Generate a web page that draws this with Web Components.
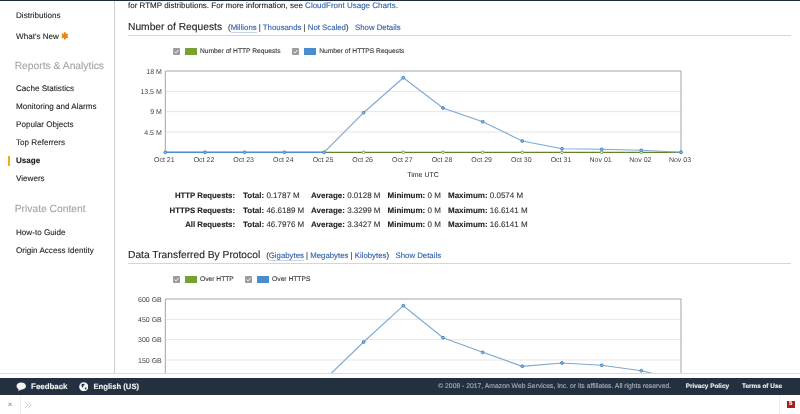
<!DOCTYPE html>
<html><head><meta charset="utf-8">
<style>
html,body{margin:0;padding:0;height:100%;overflow:hidden;background:#fff;font-family:"Liberation Sans",Arial,sans-serif}
body{filter:blur(.35px);text-rendering:geometricPrecision;-webkit-text-stroke:.1px}
</style></head><body>
<console-shell>
  <side-nav slot="nav">
    <nav-item>Distributions</nav-item>
    <nav-item style="margin-top:3px">What's New <span style="color:#e8860c;font-weight:700;font-size:8.5px;line-height:9px">✱</span></nav-item>
    <nav-title style="margin-top:10px">Reports &amp; Analytics</nav-title>
    <nav-item>Cache Statistics</nav-item>
    <nav-item>Monitoring and Alarms</nav-item>
    <nav-item>Popular Objects</nav-item>
    <nav-item>Top Referrers</nav-item>
    <nav-item active>Usage</nav-item>
    <nav-item>Viewers</nav-item>
    <nav-title style="margin-top:11px;height:25px">Private Content</nav-title>
    <nav-item>How-to Guide</nav-item>
    <nav-item>Origin Access Identity</nav-item>
  </side-nav>
  <main-pane slot="main">
    <intro-line>for RTMP distributions. For more information, see <a>CloudFront Usage Charts.</a></intro-line>
    <section-head title="Number of Requests" units="Millions|Thousands|Not Scaled"></section-head>
    <chart-legend a="Number of HTTP Requests" b="Number of HTTPS Requests" gap="11.7"></chart-legend>
    <line-chart height="127" unit=" M" ticks="4.5,9,13.5,18"
      pts="152.3,152.3,152.3,152.3,152.3,112.7,77.7,108,121.7,141,148.7,149.3,150.3,152.3" axis="1"></line-chart>
    <stats-grid>
      <stat-row label="HTTP Requests:" total="0.1787 M" avg="0.0128 M" min="0 M" max="0.0574 M"></stat-row>
      <stat-row label="HTTPS Requests:" total="46.6189 M" avg="3.3299 M" min="0 M" max="16.6141 M"></stat-row>
      <stat-row label="All Requests:" total="46.7976 M" avg="3.3427 M" min="0 M" max="16.6141 M"></stat-row>
    </stats-grid>
    <section-head style="margin-top:12.5px" title="Data Transferred By Protocol" units="Gigabytes|Megabytes|Kilobytes"></section-head>
    <chart-legend a="Over HTTP" b="Over HTTPS" gap="11.3"></chart-legend>
    <line-chart height="90" unit=" GB" ticks="150,300,450,600"
      pts="380.3,380.3,380.3,380.3,380.3,342,305.7,337.7,352.3,366.3,363,365.3,370.7,380.3" second="1"></line-chart>
  </main-pane>
</console-shell>
<console-footer></console-footer>
<tool-bar></tool-bar>
<script>
function def(name, html){
  customElements.define(name,class extends HTMLElement{
    constructor(){super();this.attachShadow({mode:'open'});}
    connectedCallback(){
      this.shadowRoot.innerHTML = typeof html==='function'?html(this):html;
    }
  });
}
def('console-shell',`<style>
:host{display:block;height:374px;overflow:hidden;border-top:1px solid #1f2d3d;border-bottom:1px solid #dcdcdc;box-sizing:border-box}
.r{display:flex;height:100%}
::slotted([slot=nav]){flex:0 0 114px;min-width:0}
::slotted([slot=main]){flex:1;min-width:0}
</style><div class="r"><slot name="nav"></slot><slot name="main"></slot></div>`);
def('side-nav',`<style>
:host{display:block;border-right:1px solid #cfcfcf;padding-top:5.5px;height:100%;font-size:8.1px;color:#222}
</style><slot></slot>`);
def('nav-item',el=>`<style>
:host{display:block;height:18px;line-height:18px;padding-left:16px;position:relative;color:#222;white-space:nowrap}
:host([active]){font-weight:700}
.bar{position:absolute;left:8px;top:4px;width:2px;height:10px;background:#f5a623;display:block}
</style>${el.hasAttribute('active')?'<span class="bar"></span>':''}<slot></slot>`);
def('nav-title',`<style>
:host{display:block;height:24px;line-height:22px;padding-left:14.7px;font-size:10.3px;color:#a4a4a4;white-space:nowrap}
</style><slot></slot>`);
def('main-pane',`<style>
:host{display:block;padding:0 0 0 13px;color:#222;box-sizing:border-box}
</style><slot></slot>`);
def('intro-line',`<style>
:host{display:block;height:9px;line-height:9px;font-size:8px;color:#222;white-space:nowrap}
::slotted(a){color:#2b5ea7}
</style><slot></slot>`);
def('section-head',el=>{
  const u=el.getAttribute('units').split('|');
  const parts=u.map((t,i)=>`<a class="${i==0?'sel':''}">${t}</a>`).join(' <span>|</span> ');
  return `<style>
:host{display:block;margin-top:7px;margin-right:9px;height:19px;border-bottom:1px solid #d6d6d6;box-sizing:border-box;padding-top:4px;white-space:nowrap}
.w{display:flex;align-items:baseline}
h2{margin:0;font:400 10.25px/14px "Liberation Sans",Arial,sans-serif;color:#222}
.u{margin-left:6px;font-size:7.8px;color:#333}
a{color:#2b5ea7}
.sel{border-bottom:1px solid #c6d3e4}
.d{margin-left:6.5px;font-size:7.8px;color:#2b5ea7}
</style><div class="w"><h2>${el.getAttribute('title')}</h2><span class="u">(${parts})</span><span class="d">Show Details</span></div>`});
def('chart-legend',el=>{
  const chk=`<span class="c"><svg width="7" height="7" viewBox="0 0 7 7"><path d="M1.500 3.600 3 5l2.600-3" fill="none" stroke="#eee" stroke-width="1"/></svg></span>`;
  return `<style>
:host{display:flex;align-items:center;height:18px;margin-top:6px;padding-left:45px;font-size:6.7px;color:#333;white-space:nowrap}
.c{width:7px;height:7px;background:#9c9c9c;border-radius:1px;margin-right:5px;display:flex}
.s{width:12px;height:7px;margin-right:3px}
.g{background:#78a032}.b{background:#4a8dcc}
.t{margin-right:var(--g)}
</style>${chk}<span class="s g"></span><span class="t" style="--g:${el.getAttribute('gap')}px">${el.getAttribute('a')}</span>${chk}<span class="s b"></span><span>${el.getAttribute('b')}</span>`});
def('line-chart',el=>{
  const second=el.hasAttribute('second');
  const h=+el.getAttribute('height');
  const L=165.3-128, R=681-128, sx=(R-L)/13;
  const X=i=>L+sx*i;
  const pts=el.getAttribute('pts').split(',').map(Number);
  const oy=second?288:60;
  const Y=v=>v-oy;
  const T=second?299:71, B=second?380.3:152.3;
  const st=(B-T)/4;
  const ticks=el.getAttribute('ticks').split(',');
  const unit=el.getAttribute('unit');
  let s='';
  ticks.forEach((t,i)=>{
    const y=Y(B-st*(i+1));
    if(i<3) s+=`<line x1="${L}" x2="${R}" y1="${y}" y2="${y}" stroke="#e6e6e6" stroke-width="1"/>`;
    s+=`<text x="${L-3.5}" y="${y+2.6}" text-anchor="end" class="t">${t}${unit}</text>`;
  });
  s+=`<path d="M${L} ${Y(B)}V${Y(T)}H${R}V${Y(B)}" fill="none" stroke="#a4a4a4" stroke-width="1"/>`;
  if(!second){
    const lab=['Oct 21','Oct 22','Oct 23','Oct 24','Oct 25','Oct 26','Oct 27','Oct 28','Oct 29','Oct 30','Oct 31','Nov 01','Nov 02','Nov 03'];
    lab.forEach((t,i)=>{s+=`<text x="${X(i)-1}" y="${Y(161.6)}" text-anchor="middle" class="t">${t}</text>`});
    s+=`<text x="295" y="${Y(177.2)}" class="b" text-anchor="middle">Time UTC</text>`;
    s+=`<path d="M${L} ${Y(B)}H${R}" stroke="#64822e" stroke-width="1.3" fill="none"/>`;
    for(let i=5;i<14;i++) s+=`<circle cx="${X(i)}" cy="${Y(B)}" r="1.3" fill="#fff" stroke="#7da23a" stroke-width="1"/>`;
  }
  const line=pts.map((v,i)=>`${X(i).toFixed(1)},${Y(v).toFixed(1)}`).join(' ');
  s+=`<polyline points="${line}" fill="none" stroke="#7fa8d0" stroke-width="1.15"/>`;
  if(!second) s+=`<path d="M${L} ${Y(B)}H${X(4)}" stroke="#4d8fca" stroke-width="1.3" fill="none"/>`;
  pts.forEach((v,i)=>{s+=`<circle cx="${X(i).toFixed(1)}" cy="${Y(v).toFixed(1)}" r="1.4" fill="#8fbbe6" stroke="#3f86c8" stroke-width="1"/>`});
  return `<style>
:host{display:block;height:${h}px}
svg{display:block}
.t{font:7px "Liberation Sans",Arial,sans-serif;fill:#444}
.b{font:7px "Liberation Sans",Arial,sans-serif;fill:#222}
</style><svg width="672" height="${h}" viewBox="0 0 672 ${h}">${s}</svg>`;
});
def('stats-grid',`<style>
:host{display:grid;grid-template-columns:115px 68px 76.5px 60.5px auto;font-size:8px;color:#333;margin-top:2px}
</style><slot></slot>`);
def('stat-row',el=>{
  const a=k=>el.getAttribute(k);
  return `<style>
:host{display:contents}
div{height:14.5px;line-height:14.5px;white-space:nowrap}
b{color:#222}
.l{text-align:right;font-weight:700;color:#222;padding-right:8px;font-size:7.8px}
</style><div class="l">${a('label')}</div><div><b>Total:</b> ${a('total')}</div><div><b>Average:</b> ${a('avg')}</div><div><b>Minimum:</b> ${a('min')}</div><div><b>Maximum:</b> ${a('max')}</div>`});
def('console-footer',`<style>
:host{display:flex;align-items:center;height:17px;margin-top:4px;background:#22303f;color:#fff;font-size:7.9px;white-space:nowrap;padding-left:16px;box-sizing:border-box}
b{font-weight:700;color:#f2f2f2}
.i{display:flex;align-items:center;gap:4.6px;margin-right:11px}
.i+.i{gap:5.4px;font-size:7.7px}
.sp{flex:1}
.c{color:#aab2bb;font-size:6.8px;margin-right:14.5px}
.l{margin-right:13px;color:#f2f2f2;font-weight:700;font-size:6.4px}
.l.z{margin-right:18px}
</style><span class="i"><svg width="10.500" height="9.500" viewBox="0 0 11 10"><path d="M5.500 .5C2.500 .5.500 2.200.500 4.300c0 1.400.900 2.500 2.200 3.200L2.400 9.600 5 8.100h.5c3 0 5-1.600 5-3.800S8.500 .5 5.500 .5z" fill="#f4f4f4"/></svg><b>Feedback</b></span>
<span class="i"><svg width="9.500" height="9.500" viewBox="0 0 11 11"><circle cx="5.500" cy="5.500" r="5.300" fill="#f4f4f4"/><path d="M3 2.500c1-.8 3-.8 3.500.2.300.8-1 1-1.500 1.800-.4.700.3 1.500-.5 1.800C3.500 6.600 2.500 4 3 2.500zM7.500 6.500c.7-.3 1.500.2 1.200 1-.3.700-1 1.300-1.700 1.200-.5-.5 0-1.800.5-2.200z" fill="#22303f"/></svg><b>English (US)</b></span>
<span class="sp"></span><span class="c">© 2008 - 2017, Amazon Web Services, Inc. or its affiliates. All rights reserved.</span><span class="l">Privacy Policy</span><span class="l z">Terms of Use</span>`);
def('tool-bar',`<style>
:host{display:flex;align-items:center;height:19px;background:#fff;color:#999;box-sizing:border-box}
.x{width:21px;height:100%;display:flex;align-items:center;justify-content:center;font-size:8px;border-right:1px solid #eee;box-sizing:border-box;color:#888}
.m{margin-left:2.500px;display:flex}
.sp{flex:1}
.n{height:100%;width:21px;border-left:1px solid #eee;box-sizing:border-box;display:flex;align-items:center;padding-left:6.500px}
.n span{display:block;width:8.500px;height:6.500px;line-height:6.500px;background:#a52222;color:#fff;font-size:6px;text-align:center;font-weight:700}
</style><span class="x">×</span><span class="m"><svg width="8" height="8" viewBox="0 0 8 8"><path d="M.8 .8 4 4 .8 7.200M4 .8 7.200 4 4 7.200" fill="none" stroke="#c8c8c8" stroke-width=".9"/></svg></span><span class="sp"></span><span class="n"><span>5</span></span>`);
</script>
</body></html>
